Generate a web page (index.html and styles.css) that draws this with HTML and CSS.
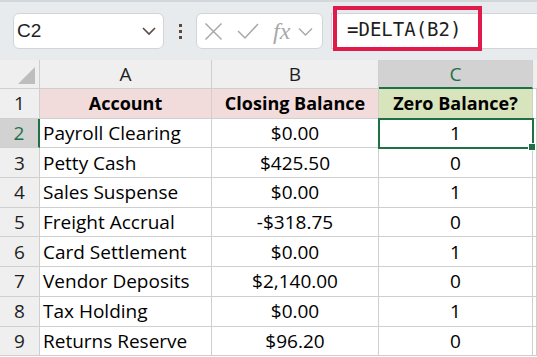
FILE: index.html
```html
<!DOCTYPE html>
<html>
<head>
<meta charset="utf-8">
<link rel="stylesheet" href="styles.css">
</head>
<body>
<div class="toolbar">
  <div class="namebox">
    <span class="ref">C2</span>
    <svg class="chev" width="16" height="10" viewBox="0 0 16 10"><path d="M2 2 L8 8 L14 2" fill="none" stroke="#5a4a40" stroke-width="1.6"/></svg>
  </div>
  <div class="dots"><i></i><i></i><i></i></div>
  <div class="fbtns">
    <svg width="19" height="19" viewBox="0 0 19 19"><path d="M1.5 1.5 L17.5 17.5 M17.5 1.5 L1.5 17.5" stroke="#a8a8a8" stroke-width="1.5" fill="none"/></svg>
    <svg width="22" height="18" viewBox="0 0 22 18"><path d="M1 9 L8 16 L21 2" stroke="#a8a8a8" stroke-width="1.5" fill="none"/></svg>
    <span class="fx">fx</span>
    <svg width="15" height="9" viewBox="0 0 15 9"><path d="M1 1.5 L7.5 8 L14 1.5" fill="none" stroke="#a8a8a8" stroke-width="1.4"/></svg>
  </div>
  <div class="fbar">
    <div class="formula">=DELTA(B2)</div>
  </div>
</div>
<div class="sheet">
  <div class="corner"><span class="tri"></span></div>
  <div class="ch">A</div>
  <div class="ch">B</div>
  <div class="ch sel">C</div>
  <div class="ch last"></div>

  <div class="rh">1</div>
  <div class="c hd pink">Account</div>
  <div class="c hd pink ctr">Closing Balance</div>
  <div class="c hd green ctr">Zero Balance?</div>
  <div class="c"></div>

  <div class="rh selr">2</div>
  <div class="c">Payroll Clearing</div>
  <div class="c ctr">$0.00</div>
  <div class="c ctr active">1<span class="handle"></span></div>
  <div class="c"></div>

  <div class="rh">3</div>
  <div class="c">Petty Cash</div>
  <div class="c ctr">$425.50</div>
  <div class="c ctr">0</div>
  <div class="c"></div>

  <div class="rh">4</div>
  <div class="c">Sales Suspense</div>
  <div class="c ctr">$0.00</div>
  <div class="c ctr">1</div>
  <div class="c"></div>

  <div class="rh">5</div>
  <div class="c">Freight Accrual</div>
  <div class="c ctr">-$318.75</div>
  <div class="c ctr">0</div>
  <div class="c"></div>

  <div class="rh">6</div>
  <div class="c">Card Settlement</div>
  <div class="c ctr">$0.00</div>
  <div class="c ctr">1</div>
  <div class="c"></div>

  <div class="rh">7</div>
  <div class="c">Vendor Deposits</div>
  <div class="c ctr">$2,140.00</div>
  <div class="c ctr">0</div>
  <div class="c"></div>

  <div class="rh">8</div>
  <div class="c">Tax Holding</div>
  <div class="c ctr">$0.00</div>
  <div class="c ctr">1</div>
  <div class="c"></div>

  <div class="rh">9</div>
  <div class="c">Returns Reserve</div>
  <div class="c ctr">$96.20</div>
  <div class="c ctr">0</div>
  <div class="c"></div>
</div>
</body>
</html>
```
FILE: styles.css
```css
html, body {
  margin: 0;
  padding: 0;
  width: 537px;
  height: 357px;
  overflow: hidden;
  background: #ffffff;
}
.toolbar {
  height: 60px;
  box-sizing: border-box;
  background: #e8ebee;
  border-top: 2px solid #d3d6da;
  display: flex;
  align-items: center;
  padding-left: 13px;
  position: relative;
}
.namebox {
  width: 151px;
  height: 36px;
  box-sizing: border-box;
  background: #fff;
  border: 1px solid #d2d4d7;
  border-radius: 6px;
  display: flex;
  align-items: center;
  justify-content: space-between;
  padding: 0 6px 0 3px;
}
.ref {
  font-family: "Liberation Sans", Arial, sans-serif;
  font-size: 19px;
  color: #1e1e1e;
}
.dots {
  width: 32px;
  display: flex;
  flex-direction: column;
  align-items: center;
  gap: 3px;
}
.dots i {
  display: block;
  width: 3px;
  height: 3px;
  background: #5a4a40;
}
.fbtns {
  width: 127px;
  height: 36px;
  box-sizing: border-box;
  background: #fff;
  border: 1px solid #d2d4d7;
  border-radius: 6px;
  display: flex;
  align-items: center;
  padding-left: 7px;
  gap: 14px;
}
.fx {
  font-family: "Liberation Serif", serif;
  font-style: italic;
  font-size: 24px;
  color: #a8a8a8;
  margin-left: 0px;
  margin-right: -6px;
  line-height: 1;
}
.fbar {
  margin-left: 8px;
  flex: 1;
  height: 36px;
  box-sizing: border-box;
  background: #fff;
  border-top: 1px solid #d2d4d7;
  border-bottom: 1px solid #d2d4d7;
  border-left: 1px solid #d2d4d7;
  position: relative;
}
.formula {
  position: absolute;
  left: 1px;
  top: -8px;
  width: 149px;
  height: 45px;
  box-sizing: border-box;
  border: 4px solid #e01b4b;
  font-family: "DejaVu Sans Mono", "Liberation Mono", monospace;
  font-size: 19px;
  color: #1e1e1e;
  display: flex;
  align-items: center;
  padding-left: 10px;
}
.sheet {
  display: grid;
  grid-template-columns: 40px 172px 167px 154px 1fr;
  grid-template-rows: 29px repeat(9, 29.7px);
  background: #ffffff;
  font-family: "Open Sans", "Liberation Sans", sans-serif;
  font-size: 19px;
  color: #000;
}
.corner {
  background: #efefef;
  border-right: 1px solid #cfcfcf;
  border-bottom: 1px solid #cfcfcf;
  position: relative;
}
.tri {
  position: absolute;
  right: 4px;
  bottom: 4px;
  width: 0;
  height: 0;
  border-left: 17px solid transparent;
  border-bottom: 17px solid #bdbdbd;
}
.ch {
  background: #efefef;
  border-right: 1px solid #cfcfcf;
  border-bottom: 1px solid #cfcfcf;
  display: flex;
  align-items: center;
  justify-content: center;
  font-size: 19px;
  color: #1e1e1e;
}
.ch.sel {
  background: #d2d2d2;
  color: #1f7145;
  border-bottom: 2px solid #1f7145;
}
.ch.last {
  border-right: none;
}
.rh {
  background: #efefef;
  border-right: 1px solid #cfcfcf;
  border-bottom: 1px solid #cfcfcf;
  display: flex;
  align-items: center;
  justify-content: center;
  font-size: 19px;
  color: #1e1e1e;
}
.rh.selr {
  background: #d2d2d2;
  color: #1f7145;
  border-right: 2px solid #1f7145;
}
.c {
  border-right: 1px solid #cfcfcf;
  border-bottom: 1px solid #cfcfcf;
  display: flex;
  align-items: center;
  padding-left: 3px;
  white-space: nowrap;
  overflow: hidden;
  position: relative;
}
.c.ctr {
  justify-content: center;
  padding-left: 0;
}
.c.hd {
  font-weight: 700;
  font-size: 18px;
  justify-content: center;
  padding-left: 0;
}
.pink { background: #f2dcdb; }
.green { background: #d8e4bc; }
.c.active {
  overflow: visible;
  outline: 2px solid #1f7145;
  outline-offset: -1px;
  z-index: 2;
}
.handle {
  position: absolute;
  right: -4px;
  bottom: -4px;
  width: 6px;
  height: 6px;
  background: #1f7145;
  border: 1px solid #fff;
}
```
